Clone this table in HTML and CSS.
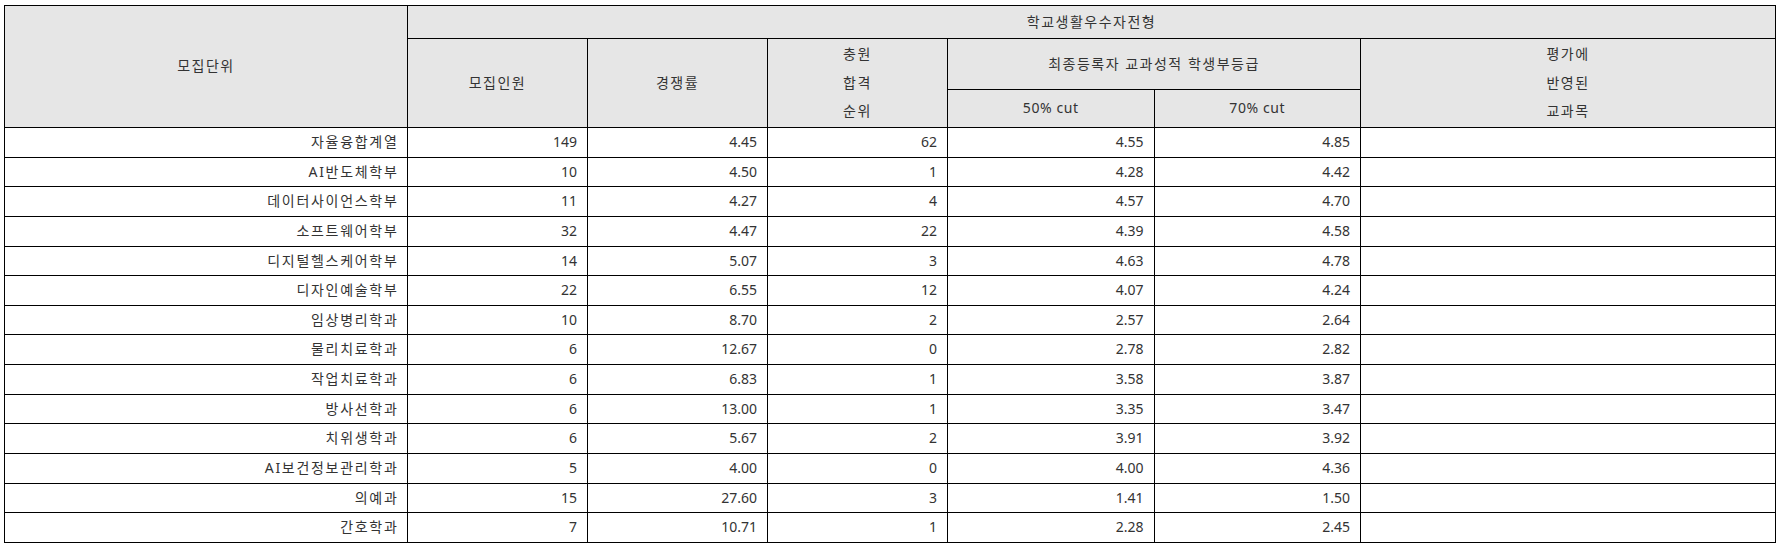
FILE: index.html
```html
<!DOCTYPE html>
<html lang="ko">
<head>
<meta charset="utf-8">
<title>학교생활우수자전형</title>
<link rel="stylesheet" href="styles.css">
</head>
<body>
<table class="result">
  <colgroup>
    <col class="c-unit">
    <col class="c-num">
    <col class="c-num">
    <col class="c-num">
    <col class="c-cut">
    <col class="c-cut">
    <col class="c-subj">
  </colgroup>
  <thead>
    <tr class="h1">
      <th class="ko" rowspan="3">모집단위</th>
      <th class="ko" colspan="6">학교생활우수자전형</th>
    </tr>
    <tr class="h2">
      <th class="ko" rowspan="2">모집인원</th>
      <th class="ko" rowspan="2">경쟁률</th>
      <th class="ko" rowspan="2">충원<br>합격<br>순위</th>
      <th class="ko" colspan="2">최종등록자 교과성적 학생부등급</th>
      <th class="ko" rowspan="2">평가에<br>반영된<br>교과목</th>
    </tr>
    <tr class="h3">
      <th class="lat">50% cut</th>
      <th class="lat">70% cut</th>
    </tr>
  </thead>
  <tbody>
    <tr><td class="unit">자율융합계열</td><td>149</td><td>4.45</td><td>62</td><td>4.55</td><td>4.85</td><td></td></tr>
    <tr><td class="unit">AI반도체학부</td><td>10</td><td>4.50</td><td>1</td><td>4.28</td><td>4.42</td><td></td></tr>
    <tr><td class="unit">데이터사이언스학부</td><td>11</td><td>4.27</td><td>4</td><td>4.57</td><td>4.70</td><td></td></tr>
    <tr><td class="unit">소프트웨어학부</td><td>32</td><td>4.47</td><td>22</td><td>4.39</td><td>4.58</td><td></td></tr>
    <tr><td class="unit">디지털헬스케어학부</td><td>14</td><td>5.07</td><td>3</td><td>4.63</td><td>4.78</td><td></td></tr>
    <tr><td class="unit">디자인예술학부</td><td>22</td><td>6.55</td><td>12</td><td>4.07</td><td>4.24</td><td></td></tr>
    <tr><td class="unit">임상병리학과</td><td>10</td><td>8.70</td><td>2</td><td>2.57</td><td>2.64</td><td></td></tr>
    <tr><td class="unit">물리치료학과</td><td>6</td><td>12.67</td><td>0</td><td>2.78</td><td>2.82</td><td></td></tr>
    <tr><td class="unit">작업치료학과</td><td>6</td><td>6.83</td><td>1</td><td>3.58</td><td>3.87</td><td></td></tr>
    <tr><td class="unit">방사선학과</td><td>6</td><td>13.00</td><td>1</td><td>3.35</td><td>3.47</td><td></td></tr>
    <tr><td class="unit">치위생학과</td><td>6</td><td>5.67</td><td>2</td><td>3.91</td><td>3.92</td><td></td></tr>
    <tr><td class="unit">AI보건정보관리학과</td><td>5</td><td>4.00</td><td>0</td><td>4.00</td><td>4.36</td><td></td></tr>
    <tr><td class="unit">의예과</td><td>15</td><td>27.60</td><td>3</td><td>1.41</td><td>1.50</td><td></td></tr>
    <tr><td class="unit">간호학과</td><td>7</td><td>10.71</td><td>1</td><td>2.28</td><td>2.45</td><td></td></tr>
  </tbody>
</table>
</body>
</html>
```
FILE: styles.css
```css
html, body {
  margin: 0;
  padding: 0;
  background: #ffffff;
}

body {
  padding: 5px 0 0 4px;
  font-family: "Noto Sans", "Noto Sans CJK KR", sans-serif;
  font-size: 14px;
  color: #333333;
}

.result {
  border-collapse: collapse;
  table-layout: fixed;
  width: 1772px;
}

.c-unit { width: 403px; }
.c-num { width: 180px; }
.c-cut { width: 206.5px; }
.c-subj { width: 415px; }

.result th,
.result td {
  border: 1px solid #000000;
  padding: 0 10px;
  font-weight: normal;
}

.result th {
  background: #e6e6e6;
  text-align: center;
  vertical-align: middle;
  line-height: 28.5px;
}

.result th.ko {
  letter-spacing: 1.5px;
}

.result th.lat {
  letter-spacing: 0.6px;
}

.result .h1 { height: 33px; }
.result .h2 { height: 51px; }
.result .h3 { height: 38px; }

.result td {
  text-align: right;
  vertical-align: middle;
  line-height: 28.64px;
  height: 28.64px;
}

.result td.unit {
  letter-spacing: 1.7px;
  padding-right: 8.5px;
}
```
